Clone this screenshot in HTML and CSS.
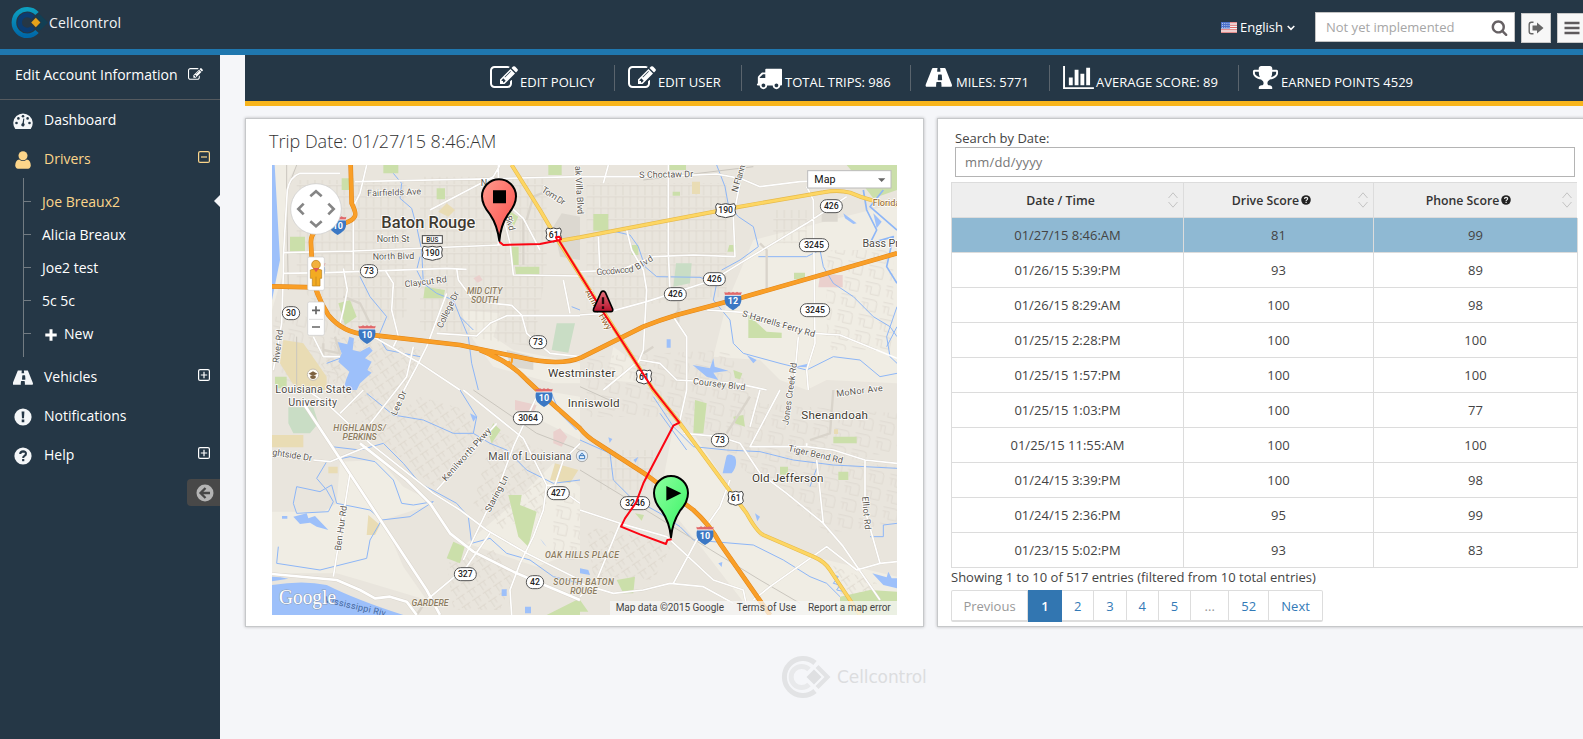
FILE: index.html
```html
<!DOCTYPE html>
<html lang="en">
<head>
<meta charset="utf-8">
<title>Cellcontrol</title>
<link rel="stylesheet" href="styles.css">
</head>
<body>
<svg class="defs" width="0" height="0" aria-hidden="true">
  <defs>
    <symbol id="i-edit" viewBox="0 0 1792 1792"><path d="M888 1184l116-116-152-152-116 116v56h96v96h56zm440-720q-16-16-33 1l-350 350q-17 17-1 33t33-1l350-350q17-17 1-33zm80 594v190q0 119-84.500 203.500t-203.500 84.500h-832q-119 0-203.500-84.500t-84.500-203.500v-832q0-119 84.500-203.500t203.500-84.500h832q63 0 117 25 15 7 18 23 3 17-9 29l-49 49q-14 14-32 8-23-6-45-6h-832q-66 0-113 47t-47 113v832q0 66 47 113t113 47h832q66 0 113-47t47-113v-126q0-13 9-22l64-64q15-15 35-7t20 29zm-96-738l288 288-672 672h-288v-288zm444 132l-92 92-288-288 92-92q28-28 68-28t68 28l152 152q28 28 28 68t-28 68z"/></symbol>
    <symbol id="i-truck" viewBox="0 0 1792 1792"><path d="M640 1408q0-52-38-90t-90-38-90 38-38 90 38 90 90 38 90-38 38-90zm-384-512h384v-256h-158q-13 0-22 9l-195 195q-9 9-9 22v30zm1280 512q0-52-38-90t-90-38-90 38-38 90 38 90 90 38 90-38 38-90zm256-1088v1024q0 15-4 26.500t-13.500 18.500-16.500 11.500-23.500 6-22.500 2-25.500 0-22.500-.5q0 106-75 181t-181 75-181-75-75-181h-384q0 106-75 181t-181 75-181-75-75-181h-64q-3 0-22.500.5t-25.500 0-22.500-2-23.500-6-16.500-11.500-13.500-18.500-4-26.500q0-26 19-45t45-19v-320q0-8-.5-35t0-38 2.500-34.500 6.500-37 14-30.500 22.500-30l198-198q19-19 50.500-32t58.500-13h160v-192q0-26 19-45t45-19h1024q26 0 45 19t19 45z"/></symbol>
    <symbol id="i-road" viewBox="0 0 1792 1792"><path d="M1111 1016v-4l-24-320q-1-13-11-22.500t-23-9.500h-186q-13 0-23 9.500t-11 22.500l-24 320v4q-1 12 8 20t21 8h244q12 0 21-8t8-20zm681 404q0 73-46 73h-704q13 0 22-9.500t8-22.500l-20-256q-1-13-11-22.500t-23-9.500h-272q-13 0-23 9.500t-11 22.500l-20 256q-1 13 8 22.500t22 9.500h-704q-46 0-46-73 0-54 26-116l417-1044q8-19 26-33t38-14h339q-13 0-23 9.500t-11 22.500l-15 192q-1 14 8 23t22 9h166q13 0 22-9t8-23l-15-192q-1-13-11-22.500t-23-9.500h339q20 0 38 14t26 33l417 1044q26 62 26 116z"/></symbol>
    <symbol id="i-chart" viewBox="0 0 2048 1792"><path d="M640 896v512h-256v-512h256zm384-512v1024h-256v-1024h256zm1024 1152v128h-2048v-1536h128v1408h1920zm-640-896v768h-256v-768h256zm384-384v1152h-256v-1152h256z"/></symbol>
    <symbol id="i-trophy" viewBox="0 0 1792 1792"><path d="M522 883q-74-162-74-371h-256v96q0 78 94.500 162t235.500 113zm1078-275v-96h-256q0 209-74 371 141-29 235.500-113t94.500-162zm128-128v128q0 71-41.500 143t-112 130-173 97.500-215.500 44.500q-42 54-95 95-38 34-52.500 72.500t-14.500 89.500q0 54 30.500 91t97.500 37q75 0 133.500 45.500t58.500 114.500v64q0 14-9 23t-23 9h-832q-14 0-23-9t-9-23v-64q0-69 58.500-114.500t133.500-45.500q67 0 97.500-37t30.500-91q0-51-14.500-89.500t-52.500-72.500q-53-41-95-95-113-5-215.500-44.500t-173-97.500-112-130-41.500-143v-128q0-40 28-68t68-28h288v-96q0-66 47-113t113-47h576q66 0 113 47t47 113v96h288q40 0 68 28t28 68z"/></symbol>
    <symbol id="i-search" viewBox="0 0 1792 1792"><path d="M1216 832q0-185-131.500-316.500t-316.500-131.500-316.500 131.500-131.500 316.500 131.500 316.500 316.500 131.500 316.500-131.500 131.500-316.500zm512 832q0 52-38 90t-90 38q-54 0-90-38l-343-342q-179 124-399 124-143 0-273.500-55.500t-225-150-150-225-55.500-273.500 55.500-273.500 150-225 225-150 273.500-55.500 273.500 55.500 225 150 150 225 55.500 273.500q0 220-124 399l343 343q37 37 37 90z"/></symbol>
    <symbol id="i-help" viewBox="0 0 18 18"><circle cx="9" cy="9" r="8.600"/><path d="M6.200 7Q6.400 4.400 9.100 4.400Q12 4.500 11.900 6.800Q11.800 8.100 10.400 8.900Q9.200 9.500 9.200 10.900" fill="none" stroke="var(--hole)" stroke-width="2.100"/><path d="M8.100 12h2.200v2.200h-2.200z" fill="var(--hole)"/></symbol>
    <g id="shield"><path d="M-24 -14Q-28 4 -20 16Q-10 26 0 31Q10 26 20 16Q28 4 24 -14Z" fill="#3b78c4"/><path d="M-24 -15L-26 -24Q-18 -20 -12 -25Q-6 -20 0 -25Q6 -20 12 -25Q18 -20 26 -24L24 -15Z" fill="#e0686a"/><path d="M-25 -14h50" stroke="#fff" stroke-width="2.500"/></g>
    <g id="ov2"><rect x="-26" y="-19" width="52" height="39" rx="19" fill="#fff" stroke="#555" stroke-width="3"/></g>
    <g id="ov3"><rect x="-33" y="-19" width="66" height="39" rx="19" fill="#fff" stroke="#555" stroke-width="3"/></g>
    <g id="ov4"><rect x="-44" y="-19" width="88" height="39" rx="19" fill="#fff" stroke="#555" stroke-width="3"/></g>
    <g id="us2"><path d="M-19 -20Q-10 -15 0 -20Q10 -15 19 -20L23 -12Q18 0 23 10Q20 19 9 19L0 22L-9 19Q-20 19 -23 10Q-18 0 -23 -12Z" fill="#fff" stroke="#444" stroke-width="3"/></g>
    <g id="us3"><path d="M-26 -20Q-13 -15 0 -20Q13 -15 26 -20L30 -12Q26 0 30 10Q26 19 13 19L0 22L-13 19Q-26 19 -30 10Q-26 0 -30 -12Z" fill="#fff" stroke="#444" stroke-width="3"/></g>
    <pattern id="grid" width="22" height="34" patternUnits="userSpaceOnUse"><path d="M0 5H22M11 5V34" stroke="#d9d4ca" stroke-width="2" fill="none"/></pattern>
    <pattern id="grid2" width="38" height="30" patternUnits="userSpaceOnUse" patternTransform="rotate(-34)"><path d="M0 7H30M8 7V30M21 7V23" stroke="#d8d2c8" stroke-width="2" fill="none"/></pattern>
    <pattern id="grid3" width="64" height="50" patternUnits="userSpaceOnUse" patternTransform="rotate(12)"><path d="M4 8H40Q50 8 50 18V42H24V20H4M12 20V40" stroke="#dad5cb" stroke-width="2" fill="none"/></pattern>
    <linearGradient id="redpin" x1="0" x2="1" y2="1"><stop offset="0" stop-color="#ff9b8e"/><stop offset="1" stop-color="#fd4a47"/></linearGradient>
    <linearGradient id="greenpin" x1="0" x2="1" y2="1"><stop offset="0" stop-color="#8dffa0"/><stop offset="1" stop-color="#35f362"/></linearGradient>
    <linearGradient id="warn" x1="0" x2="0" y2="1"><stop offset="0" stop-color="#e5727c"/><stop offset="1" stop-color="#b5102b"/></linearGradient>
    <linearGradient id="ring" x1="0" x2="0" y2="1"><stop offset="0" stop-color="#0d9fc0"/><stop offset="1" stop-color="#0068a8"/></linearGradient>
  </defs>
</svg>

<header class="top">
  <div class="brand">
    <svg width="38" height="34" viewBox="0 0 38 34">
      <path d="M26 7.500A13.300 13.300 0 1 0 26 25.500" fill="none" stroke="url(#ring)" stroke-width="4.600"/>
      <path d="M22 11.500A7.600 7.600 0 1 0 22 21.500" fill="none" stroke="#0b3c72" stroke-width="4.600"/>
      <path d="M28 7.500L37 16.500L28 25.500L25 22.500L30.500 16.500L25 10.500Z" fill="#123f54"/>
      <path d="M24.800 11.800L29.400 16.500L24.800 21.200L20.200 16.500Z" fill="#e5a21a"/>
    </svg>
    <span class="brand-name">Cellcontrol</span>
  </div>
  <div class="top-tools">
    <div class="lang">
      <svg width="16" height="11" viewBox="0 0 16 11"><path fill="#f4f0f0" d="M0 0h16v11H0z"/><path d="M0 .8h16M0 3.200h16M0 5.500h16M0 7.800h16M0 10.200h16" stroke="#de6a68" stroke-width="1.100"/><path fill="#4d71c9" d="M0 0h9v6.500H0z"/><path d="M1 1.500h8M1 3.500h8M1 5.500h8" stroke="#c9d6f4" stroke-width=".8" stroke-dasharray="1 1.200"/></svg>
      <span>English</span>
      <svg width="8" height="6" viewBox="0 0 8 6"><path d="M.7 .9L4 4.300L7.300 .9" fill="none" stroke="#fff" stroke-width="1.500"/></svg>
    </div>
    <div class="search"><span>Not yet implemented</span><svg class="ic" width="17" height="17"><use href="#i-search"/></svg></div>
    <div class="tbtn out"><svg width="16" height="14" viewBox="0 0 16 14"><path d="M5.500 1.200H3.400Q1.200 1.200 1.200 3.400V10.600Q1.200 12.800 3.400 12.800H5.500" fill="none" stroke="#666" stroke-width="1.400"/><path d="M4.500 4.500H9V1.500L15.500 7L9 12.500V9.500H4.500Z" fill="#666"/></svg></div>
    <div class="tbtn"><svg width="16" height="14" viewBox="0 0 16 14"><path d="M.5 2h15M.5 7h15M.5 12h15" stroke="#5e5a5c" stroke-width="2.400"/></svg></div>
  </div>
</header>

<div class="body">
  <aside class="side">
    <div class="account"><span>Edit Account Information</span><svg class="ic" width="15" height="15"><use href="#i-edit"/></svg></div>
    <nav>
      <div class="row"><svg class="lead" width="20" height="18" viewBox="0 0 20 18"><path d="M2.300 17A9.700 9.700 0 1 1 17.700 17Z"/><g fill="#253746"><circle cx="3.500" cy="11" r="1.300"/><circle cx="5.400" cy="6.400" r="1.300"/><circle cx="10" cy="4.200" r="1.300"/><circle cx="14.600" cy="6.400" r="1.300"/><circle cx="16.500" cy="11" r="1.300"/><path d="M10.300 6.500L11.300 6.800L10.900 11Q12.500 12.500 11 14.200Q9.400 15 8.300 13.500Q8 11.800 9.500 11Z"/></g></svg><span>Dashboard</span></div>
      <div class="row on"><svg class="lead" width="20" height="18" viewBox="0 0 20 18"><circle cx="10" cy="4.800" r="4.500"/><path d="M6.200 8.500Q10 11.500 13.800 8.500Q17.500 9 17.800 14.500Q17.500 17.500 15 17.700H5Q2.500 17.500 2.200 14.500Q2.500 9 6.200 8.500Z"/></svg><span>Drivers</span><svg class="tog" width="12" height="12" viewBox="0 0 12 12"><rect x=".6" y=".6" width="10.800" height="10.800" rx="1.500"/><path d="M3 6h6"/></svg></div>
      <div class="sub">
        <div class="leaf on">Joe Breaux2</div>
        <div class="leaf">Alicia Breaux</div>
        <div class="leaf">Joe2 test</div>
        <div class="leaf">5c 5c</div>
        <div class="leaf new"><svg width="12" height="12" viewBox="0 0 12 12"><path d="M6 .3V11.700M.3 6H11.700" stroke="#fff" stroke-width="3"/></svg>New</div>
      </div>
      <div class="row"><svg class="lead" width="20" height="20"><use href="#i-road"/></svg><span>Vehicles</span><svg class="tog" width="12" height="12" viewBox="0 0 12 12"><rect x=".6" y=".6" width="10.800" height="10.800" rx="1.500"/><path d="M2.800 6h6.400M6 2.800v6.400"/></svg></div>
      <div class="row"><svg class="lead" width="20" height="18" viewBox="0 0 20 18"><circle cx="10" cy="9" r="8.600"/><path d="M8.600 3.500h2.800l-.4 6.800h-2zM8.700 11.600h2.600v2.600h-2.600z" fill="#253746"/></svg><span>Notifications</span></div>
      <div class="row"><svg class="lead" width="20" height="18"><use href="#i-help"/></svg><span>Help</span><svg class="tog" width="12" height="12" viewBox="0 0 12 12"><rect x=".6" y=".6" width="10.800" height="10.800" rx="1.500"/><path d="M2.800 6h6.400M6 2.800v6.400"/></svg></div>
    </nav>
    <div class="collapse"><svg width="18" height="18" viewBox="0 0 18 18"><circle cx="9" cy="9" r="8.500" fill="#b4b4b4"/><path d="M9.500 4L4.500 9L9.500 14M5 9H14" fill="none" stroke="#474747" stroke-width="2.300"/></svg></div>
  </aside>

  <main>
    <div class="stats">
      <div class="stat"><svg class="ic" width="28" height="28"><use href="#i-edit"/></svg><span>EDIT POLICY</span></div>
      <div class="stat"><svg class="ic" width="28" height="28"><use href="#i-edit"/></svg><span>EDIT USER</span></div>
      <div class="stat wide"><svg class="ic" width="26" height="26"><use href="#i-truck"/></svg><span>TOTAL TRIPS: 986</span></div>
      <div class="stat wide"><svg class="ic" width="28" height="26"><use href="#i-road"/></svg><span>MILES: 5771</span></div>
      <div class="stat"><svg class="ic" width="31" height="27"><use href="#i-chart"/></svg><span>AVERAGE SCORE: 89</span></div>
      <div class="stat"><svg class="ic" width="27" height="27"><use href="#i-trophy"/></svg><span>EARNED POINTS 4529</span></div>
    </div>

    <div class="cards">
      <section class="card trip">
        <h1>Trip Date: 01/27/15 8:46:AM</h1>
        <svg class="map" width="625" height="450" viewBox="36 45 1875 1350">
          <rect x="36" y="45" width="1875" height="1350" fill="#e9e5dd"/>
          <!-- open land -->
          <g fill="#f0ede4">
            <path d="M36 45H110L85 90L75 350L36 480ZM240 935L360 930L430 1010L525 1060L370 1110L430 1250L500 1350L300 1290L230 1270L36 1270V1085H190L230 1060Z"/>
            <path d="M600 480L720 490L700 560L760 600L960 640V700L880 700L700 650L640 570ZM1240 830L1300 850L1400 1000L1500 1160L1660 1220L1911 1280V1395H1480L1330 1200L1200 1040ZM1480 270L1911 160V500L1911 700L1700 690L1640 720L1560 690L1500 630L1360 620L1400 460Z"/>
            <path d="M620 1180L760 1060L880 940L960 1010V1200L830 1250ZM840 720L960 740V870L800 790ZM1060 590L1130 640L1150 700L1040 690Z"/>
          </g>
          <!-- residential streets -->
          <path fill="url(#grid)" d="M110 90L440 90V500L240 540L110 400ZM480 80H860V350L820 590L480 540ZM980 100H1400V440L980 480ZM1010 900H1180V1020H1010ZM1540 180H1640V280H1540Z"/>
          <path fill="url(#grid2)" d="M240 560L480 600L420 780L330 850L180 640ZM700 840L850 900L860 1080L720 1140L640 1060ZM480 740L620 780L660 900L520 1010L340 850ZM980 1130L1240 1180L1180 1290L1000 1280ZM560 1240L700 1200L760 1290L720 1380H580ZM1700 1240L1850 1300L1820 1370L1740 1330Z"/>
          <path fill="url(#grid3)" d="M980 620L1400 600L1500 760L1911 790V900L1500 1000L1260 800L980 800ZM1460 900L1911 950V1120L1700 1150L1540 1000ZM40 500H240V700H40ZM1700 300H1900V600H1700ZM880 1030H960V1230H880Z"/>
          <!-- parks, schools, medical -->
          <g fill="#cbdfaa">
            <path d="M370 45H415V70H370ZM245 85H280V120H245ZM90 260H135V310H90ZM495 410L555 420L550 445H490ZM235 460L270 450L290 500L255 525ZM765 350H838V376H768ZM755 290H776V345H755ZM745 180L775 200L760 230L745 205ZM530 115H555V148H530ZM45 680H80V715H45Z"/>
            <path d="M1000 192H1045V242H1000ZM1225 45H1278V60H1225ZM1465 495L1520 545L1565 548V564H1465ZM1602 368H1635V388H1602ZM1760 45H1911V120L1840 145L1790 80ZM1115 285H1135V315H1115ZM1420 660L1447 670L1440 688L1425 684ZM1408 285H1428V305H1402ZM1238 125h22v12h-22ZM865 45H905V75H865Z"/>
            <path d="M745 1035H785L780 1065L830 1085L805 1190L775 1160ZM580 1175L614 1190L600 1240L560 1225ZM700 820L722 840L695 880L685 850ZM860 1395L960 1345V1395ZM1305 750L1340 760L1330 850L1300 850ZM1420 800L1450 795L1455 830L1425 820ZM1720 860H1790V880H1720ZM1560 950h24v24h-24ZM1735 965H1765V990H1735ZM1740 1340L1830 1320L1911 1325V1395H1740ZM1070 1290L1125 1280L1120 1330L1090 1330ZM960 1350V1385H985ZM1125 1090L1152 1095L1145 1112Z"/>
          </g>
          <g fill="#e9dcb4"><path d="M70 570L130 580L200 680V720H110L60 640ZM36 855H130V892H36ZM885 940L955 960L930 1000L870 990ZM325 1095L360 1125L345 1155H320ZM1296 95H1320V132H1296ZM205 950h28v20h-28ZM1722 838h12v14h-12ZM535 185l25-25l25 20l-20 20Z"/></g>
          <g fill="#c9ddc5"><path d="M85 772H160L175 820L150 850H100L85 820ZM1248 340H1295L1290 400L1240 410ZM890 520H945L925 608L875 600Z"/></g>
          <g fill="#ead0cd"><path d="M1680 375H1748V412H1675ZM880 845L900 835L922 860L905 890L880 880ZM765 750L830 765L820 790L765 780ZM640 385l18-10l10 15l-15 8Z"/></g>
          <path d="M880 230L905 190L960 200V330L900 320ZM1685 185h48v30h-48ZM740 600l80 20v40l-70-10Z" fill="#dcd8d0"/>
          <!-- water -->
          <g fill="#9dc0fa">
            <path d="M36 45H44L60 330L36 450ZM36 1305Q130 1290 200 1305Q290 1350 430 1395H36ZM36 1280Q60 1280 85 1286L36 1294Z"/>
            <path d="M230 575L262 583L268 560L282 565L278 600L300 605L328 590L338 602L315 625L335 635L322 660L335 668L300 700L290 720H250L258 690L268 665L235 635L245 610Z"/>
            <path d="M66 1098H82V1106H66ZM100 1100L140 1090L145 1105L165 1098L205 1140L170 1130L150 1118L120 1122Z"/>
            <path d="M1398 925Q1400 905 1425 920Q1435 945 1415 970H1388ZM1298 645L1350 655L1360 625L1364 650L1405 662L1360 668L1375 690L1340 680ZM1837 1270L1880 1282L1885 1265L1895 1285L1911 1285V1315L1870 1305ZM1220 568h12v25h-12ZM1750 190L1790 220L1780 222L1755 205ZM1460 615L1490 630L1480 640ZM1840 190L1865 215L1850 235ZM740 1320L742 1318L730 1335ZM725 1318h15v20h-15ZM795 1370h18v20h-18ZM960 1255L985 1260L990 1275L960 1270ZM840 1165L860 1190L850 1180ZM630 790L650 800L640 815ZM1045 862l12 5l-8 12ZM1120 930l15-10l-8 18ZM1485 1090l15 10l-8 14ZM1375 1240l12-4l-2 15ZM1605 650L1650 640L1640 652Z"/>
          </g>
          <g fill="none" stroke="#8db6f7" stroke-width="3" stroke-linejoin="round">
            <path d="M400 70L425 100L420 145L455 175L470 230L485 300L490 400L530 430L580 450L600 500L625 560L635 640L655 720"/>
            <path d="M300 380L330 440L380 500L355 560L380 600L480 620M960 480L935 470M600 500L640 540"/>
            <path d="M490 400L470 360L480 320M1370 45L1395 110L1405 165L1435 200L1480 230L1495 290L1440 330L1385 360"/>
            <path d="M1045 240L1110 255L1135 290L1155 350L1190 380L1320 382L1370 400L1360 450L1410 510L1420 580L1450 610L1560 640L1640 660L1720 620L1800 630L1860 680L1911 670"/>
            <path d="M1495 320H1640L1680 300L1690 350L1720 400L1780 440L1840 500L1890 530L1911 560M1880 590L1911 530M1911 470L1880 560L1890 620L1911 640"/>
            <path d="M1810 120L1820 180L1850 240L1830 280L1900 260L1880 350L1911 400M1870 120L1830 170L1911 240" stroke-width="5"/>
            <path d="M200 640L240 625M215 890L300 900L370 880L430 940L480 1000L590 1060L625 1100L635 1180L690 1165L740 1210L810 1230L880 1280L960 1300"/>
            <path d="M110 1010L180 1025L215 1005L230 1060L330 1080L365 1110L450 1100L520 1055L460 1065L425 1060L400 990L345 935L270 920L200 935L170 985L200 1020L220 1055L205 1085L110 1090L100 1060ZM55 1190L50 1240L180 1260L320 1225L330 1170L365 1110"/>
            <path d="M320 730L400 795L490 810L580 850L640 850L690 880L740 900L800 960L880 1000L960 990M600 720L650 800L640 850M870 720L900 790L950 840M960 870L1050 910L1060 990L1110 1040L1200 1090L1260 1130L1300 1170L1480 1185L1570 1230L1650 1280L1700 1300L1740 1340"/>
            <path d="M1180 740L1240 830L1300 890L1400 900L1500 905L1600 930L1720 945L1911 955M1200 790L1280 900M1650 1010L1670 955M1830 1160H1870V1125L1911 1120M1710 1270l25 10l-15 20l20 5l-10 15l18 4"/>
          </g>
          <!-- rail -->
          <path d="M80 45V150L85 420M110 720V560M110 45L85 110M960 710L1070 760M640 720L830 850L960 900M960 960L1100 1045L1500 1290L1620 1360M1150 90L1480 50" fill="none" stroke="#cac6be" stroke-width="3"/>
          <!-- local road casings -->
          <g fill="none" stroke="#d9d4cb" stroke-linejoin="round" stroke-width="7">
            <path d="M240 70H120Q90 80 82 120L70 320V370L200 368L560 355L620 358M320 45L300 130L280 170V360M72 308L280 303L720 285M250 355L262 420L250 480L240 520M375 360L400 400L395 480L415 560L400 590M590 355L595 390L640 450L700 460L755 466L785 495L800 550L870 610L960 620M285 95L960 80M510 180L700 80L720 45M715 45V285M720 160L750 280L760 375L960 378M740 160L790 205L840 300M790 205V345M190 600L240 610L225 560M160 560L190 620H240M530 550L650 558L690 520L740 497H960M560 430L500 590L470 650L400 780M70 370L65 520L40 660M800 210L820 140L870 120M340 560L480 640L600 720M910 390L930 490M250 440L300 460L330 520"/>
            <path d="M960 80H1200L1370 72L1440 85L1500 110L1620 95L1750 90M1045 45L1030 100M1225 45V310L1230 420M1100 240L1115 300L1150 360L1160 420L1150 600L1130 650M960 495L1030 490L1160 455L1360 390L1440 340L1640 220L1760 140M1640 110L1660 150L1665 580L1640 660L1645 720M960 365L1080 360L1180 320L1300 315L1425 320L1420 200L1440 100M1340 480L1450 487L1580 530L1660 550L1740 555L1850 600M1240 500L1280 560V720M1615 560L1600 720M1030 720L1140 630L1200 640L1250 690L1430 700L1520 720M1520 420V300L1500 280M1015 260L1020 370M1180 590L1150 610M1255 455V515L1240 500L1260 475"/>
            <path d="M240 790L310 720M190 580V620M140 720L200 760L270 825L330 880L520 1030L600 1080L680 1140L800 1210L960 1290M460 590L440 680L300 860M710 820L530 1020M610 720L790 865L860 1005L850 1080L820 1160L780 1240L750 1320L755 1395M830 740L760 890L720 1000L610 1230M160 930L210 935L320 890M270 970L220 1280M960 1060L890 1010M690 1150L620 1250L500 1350L470 1395M880 1020L910 930L960 880"/>
            <path d="M1280 720L1260 810M960 1080L1080 1120L1220 1160L1360 1290L1450 1320L1460 1370M1080 1120L1010 1290L960 1340M1270 850L1380 860L1440 880L1500 970L1580 1030L1690 1120L1750 1190L1860 1350M1470 740L1400 850M1560 720L1470 890H1640M1500 720L1490 760L1470 830M1640 890L1720 900L1815 930L1911 940M1815 930V1080L1860 1240L1790 1260L1700 1190L1530 1310L1480 1350M1670 930L1690 1120M1410 990L1380 1070L1310 1170L1240 1300M960 1300L1060 1330L1150 1320L1230 1300L1330 1310L1420 1360M1720 720L1710 850L1650 870M1860 1240L1911 1235"/>
            <path stroke-width="11" d="M130 760L500 1320L540 1395M300 880L440 990L510 1060L570 1150L640 1205L760 1265L830 1295L960 1350M36 1272L230 1290L300 1320L345 1345L390 1340L440 1355L470 1395"/>
          </g>
          <!-- local roads -->
          <g fill="none" stroke="#fff" stroke-linejoin="round" stroke-width="5">
            <path d="M240 70H120Q90 80 82 120L70 320V370L200 368L560 355L620 358M320 45L300 130L280 170V360M72 308L280 303L720 285M250 355L262 420L250 480L240 520M375 360L400 400L395 480L415 560L400 590M590 355L595 390L640 450L700 460L755 466L785 495L800 550L870 610L960 620M285 95L960 80M510 180L700 80L720 45M715 45V285M720 160L750 280L760 375L960 378M740 160L790 205L840 300M530 550L650 558L690 520L740 497H960M560 430L500 590L470 650L400 780M70 370L65 520L40 660M340 560L480 640L600 720M160 560L190 620H240M910 390L930 490"/>
            <path d="M960 80H1200L1370 72L1440 85L1500 110L1620 95L1750 90M1045 45L1030 100M1225 45V310L1230 420M1100 240L1115 300L1150 360L1160 420L1150 600L1130 650M960 495L1030 490L1160 455L1360 390L1440 340L1640 220L1760 140M1640 110L1660 150L1665 580L1640 660L1645 720M960 365L1080 360L1180 320L1300 315L1425 320L1420 200L1440 100M1340 480L1450 487L1580 530L1660 550L1740 555L1850 600L1911 625M1240 500L1280 560V720M1615 560L1600 720M1030 720L1140 630L1200 640L1250 690L1430 700L1520 720M1015 260L1020 370"/>
            <path d="M240 790L310 720M140 720L200 760L270 825L330 880L520 1030L600 1080L680 1140L800 1210L960 1290M460 590L440 680L300 860M710 820L530 1020M160 930L210 935L320 890M270 970L220 1280M830 740L760 890L720 1000L610 1230M960 1060L890 1010L860 1005M690 1150L620 1250L500 1350M880 1020L910 930L960 880M610 720L790 865L860 1005L850 1080L820 1160L780 1240L750 1320L755 1395"/>
            <path d="M1280 720L1260 810M960 1080L1080 1120L1220 1160L1360 1290L1450 1320L1460 1370M1080 1120L1010 1290L960 1340M1270 850L1380 860L1440 880L1500 970L1580 1030L1690 1120L1750 1190L1860 1350M1560 720L1470 890H1640M1500 720L1470 830M1640 880V890L1720 900L1815 930L1911 940M1815 930V1080L1860 1240L1790 1260L1700 1190L1530 1310L1480 1350M1670 930L1690 1120M1410 990L1380 1070L1310 1170L1240 1300M960 1300L1060 1330L1150 1320L1230 1300L1330 1310L1420 1360M1860 1240L1911 1235"/>
            <path stroke-width="8" d="M130 760L500 1320L540 1395M300 880L440 990L510 1060L570 1150L640 1205L760 1265L830 1295L960 1350M36 1272L230 1290L300 1320L345 1345L390 1340L440 1355L470 1395"/>
          </g>
          <!-- US highways -->
          <g fill="none" stroke-linejoin="round">
            <path stroke="#e6b94a" stroke-width="12" d="M755 45L840 180L890 265L1180 720L1260 820L1400 1010L1460 1090Q1490 1145 1510 1155L1660 1220Q1695 1235 1710 1260L1800 1395M900 272L960 262L1440 170L1690 127Q1735 118 1770 128Q1830 155 1911 165"/>
            <path stroke="#fdd663" stroke-width="8.500" d="M755 45L840 180L890 265L1180 720L1260 820L1400 1010L1460 1090Q1490 1145 1510 1155L1660 1220Q1695 1235 1710 1260L1800 1395M900 272L960 262L1440 170L1690 127Q1735 118 1770 128Q1830 155 1911 165"/>
          </g>
          <!-- interstates -->
          <g fill="none" stroke-linejoin="round">
            <path stroke="#e08519" stroke-width="14" d="M272 45L275 160Q290 190 284 200Q270 225 200 225Q150 240 153 280L158 380Q165 430 205 495Q250 550 320 553L600 585L780 622Q900 650 965 622L1150 530Q1200 510 1250 495L1420 450L1911 310M36 409L165 412M660 600Q750 635 800 690L870 755L960 835Q980 860 1010 878L1160 975L1300 1080Q1350 1125 1380 1180L1530 1395"/>
            <path stroke="#f99f28" stroke-width="11" d="M272 45L275 160Q290 190 284 200Q270 225 200 225Q150 240 153 280L158 380Q165 430 205 495Q250 550 320 553L600 585L780 622Q900 650 965 622L1150 530Q1200 510 1250 495L1420 450L1911 310M36 409L165 412M660 600Q750 635 800 690L870 755L960 835Q980 860 1010 878L1160 975L1300 1080Q1350 1125 1380 1180L1530 1395"/>
            <path stroke="#f99f28" stroke-width="6" d="M650 595Q720 612 770 620M755 618Q760 640 745 645M680 612Q720 640 750 635M170 410L185 450"/>
          </g>
          <!-- shields -->
          <use href="#shield" x="233" y="224"/><use href="#shield" x="170" y="363"/><use href="#shield" x="321" y="551"/><use href="#shield" x="1419" y="450"/><use href="#shield" x="852" y="740"/><use href="#shield" x="1335" y="1154"/>
          <use href="#ov2" x="327" y="363"/><use href="#ov2" x="93" y="489"/><use href="#ov2" x="834" y="576"/><use href="#ov2" x="1380" y="870"/><use href="#ov2" x="825" y="1296"/>
          <use href="#ov3" x="1714" y="168"/><use href="#ov3" x="1363" y="387"/><use href="#ov3" x="1246" y="432"/><use href="#ov3" x="895" y="1029"/><use href="#ov3" x="616" y="1272"/>
          <use href="#ov4" x="1662" y="285"/><use href="#ov4" x="1665" y="480"/><use href="#ov4" x="804" y="804"/><use href="#ov4" x="1125" y="1059"/>
          <use href="#us2" x="881" y="254"/><use href="#us2" x="1152" y="680"/><use href="#us2" x="1427" y="1044"/>
          <use href="#us3" x="517" y="309"/><use href="#us3" x="1397" y="181"/>
          <rect x="487" y="257" width="60" height="23" fill="#fff" stroke="#444" stroke-width="3"/>
          <g class="num">
            <text x="327" y="372">73</text><text x="93" y="498">30</text><text x="834" y="585">73</text><text x="1380" y="879">73</text><text x="825" y="1305">42</text>
            <text x="1714" y="177">426</text><text x="1363" y="396">426</text><text x="1246" y="441">426</text><text x="895" y="1038">427</text><text x="616" y="1281">327</text>
            <text x="1662" y="294">3245</text><text x="1665" y="489">3245</text><text x="804" y="813">3064</text><text x="1125" y="1068">3246</text>
            <text x="881" y="263">61</text><text x="1152" y="689">61</text><text x="1427" y="1053">61</text><text x="517" y="318">190</text><text x="1397" y="190">190</text>
            <text class="bus" x="517" y="276">BUS</text>
          </g>
          <g class="inum"><text x="233" y="237">10</text><text x="321" y="563">10</text><text x="1419" y="462">12</text><text x="852" y="752">10</text><text x="1335" y="1166">10</text></g>
          <!-- place names -->
          <g class="road">
            <text x="322" y="139" textLength="162" transform="rotate(-2 322 139)">Fairfields Ave</text>
            <text x="350" y="276" textLength="98">North St</text>
            <text x="338" y="329" textLength="125" transform="rotate(-1 338 329)">North Blvd</text>
            <text x="435" y="412" textLength="127" transform="rotate(-7 435 412)">Claycut Rd</text>
            <text x="546" y="536" textLength="118" transform="rotate(-64 546 536)">College Dr</text>
            <text x="843" y="124" textLength="78" transform="rotate(33 843 124)">Tom Dr</text>
            <text x="736" y="200" textLength="45" transform="rotate(75 736 200)">Blvd</text>
            <text x="662" y="108">N</text>
            <text x="945" y="48" textLength="145" transform="rotate(87 945 48)">ak Villa Blvd</text>
            <text x="56" y="640" textLength="100" transform="rotate(-82 56 640)">River Rd</text>
            <text x="1138" y="84" textLength="162" transform="rotate(-1 1138 84)">S Choctaw Dr</text>
            <text x="1432" y="128" textLength="84" transform="rotate(-73 1432 128)">N Flann</text>
            <text x="1838" y="168" class="fl">Florida</text>
            <text x="1010" y="376" textLength="112" transform="rotate(-5 1010 376)">Goodwood</text>
            <text x="1132" y="361" textLength="58" transform="rotate(-32 1132 361)">Blvd</text>
            <text x="1445" y="499" textLength="226" transform="rotate(16 1445 499)">S Harrells Ferry Rd</text>
            <text x="974" y="425" class="fl" transform="rotate(60 974 425)">Airline Hwy</text>
            <text x="1298" y="702" textLength="158" transform="rotate(7 1298 702)">Coursey Blvd</text>
            <text x="1585" y="826" textLength="188" transform="rotate(-82 1585 826)">Jones Creek Rd</text>
            <text x="1730" y="740" textLength="140" transform="rotate(-7 1730 740)">MoNor Ave</text>
            <text x="1583" y="903" textLength="168" transform="rotate(13 1583 903)">Tiger Bend Rd</text>
            <text x="1806" y="1040" textLength="100" transform="rotate(85 1806 1040)">Elliot Rd</text>
            <text x="409" y="798" textLength="78" transform="rotate(-66 409 798)">Lee Dr</text>
            <text x="36" y="915" textLength="120" transform="rotate(9 36 915)">ghtside Dr</text>
            <text x="242" y="1203" textLength="136" transform="rotate(-82 242 1203)">Ben Hur Rd</text>
            <text x="558" y="995" textLength="204" transform="rotate(-48 558 995)">Kenilworth Pkwy</text>
            <text x="690" y="1088" textLength="120" transform="rotate(-62 690 1088)">Staring Ln</text>
            <text x="190" y="1356" textLength="190" class="river" transform="rotate(13 190 1356)">Mississippi Riv</text>
          </g>
          <g class="hood">
            <text x="674" y="432">MID CITY</text><text x="674" y="459">SOUTH</text>
            <text x="299" y="843" textLength="158">HIGHLANDS/</text><text x="299" y="871">PERKINS</text>
            <text x="510" y="1367">GARDERE</text>
            <text x="966" y="1224" textLength="222">OAK HILLS PLACE</text>
            <text x="971" y="1305" textLength="182">SOUTH BATON</text><text x="971" y="1332">ROUGE</text>
          </g>
          <g class="town">
            <text class="city" x="505" y="235" textLength="282" lengthAdjust="spacingAndGlyphs">Baton Rouge</text>
            <text x="965" y="680" textLength="202">Westminster</text><text x="1001" y="771" textLength="156">Inniswold</text>
            <text x="1724" y="806" textLength="200">Shenandoah</text><text x="1583" y="995" textLength="214">Old Jefferson</text>
          </g>
          <g class="poi">
            <text x="160" y="728" textLength="228">Louisiana State</text><text x="158" y="767" textLength="146">University</text>
            <text x="810" y="929" textLength="250">Mall of Louisiana</text><text x="1862" y="292">Bass Pr</text>
          </g>
          <circle cx="159" cy="674" r="17" fill="#fffdf8" stroke="#c7bfb2" stroke-width="3"/><path d="M146 671l13-7 13 7-13 7zM151 677v7q8 6 16 0v-7" fill="#7e6240"/>
          <circle cx="966" cy="918" r="17" fill="#e6f0fb" stroke="#aaa" stroke-width="3"/><path d="M958 917h16v9h-16zM961 917q5-16 10 0" fill="none" stroke="#3a77ba" stroke-width="3"/>
          <!-- driven route -->
          <path d="M718 275L730 285L840 282L896 271M888 262L892 272L903 268L898 260Z M896 270L1030 487L1178 716L1258 818L1240 827L1150 1000L1128 1058L1095 1105L1083 1130L1140 1153L1218 1182L1222 1170L1235 1168" fill="none" stroke="#fb0513" stroke-width="6" stroke-linejoin="round"/>
          <g stroke="#000" stroke-width="6" stroke-linejoin="round">
            <path d="M718 273Q712 225 690 193Q666 165 666 139A51 51 0 0 1 768 139Q768 165 744 193Q722 225 718 273Z" fill="url(#redpin)"/>
            <path d="M1233 1162Q1229 1118 1205 1082Q1182 1056 1182 1029A51 51 0 0 1 1284 1029Q1284 1056 1260 1082Q1237 1118 1233 1162Z" fill="url(#greenpin)"/>
            <path d="M1023 427Q1029 420 1036 427L1058 477Q1060 485 1052 485H1006Q998 485 1001 476Z" fill="url(#warn)" stroke-width="5"/>
          </g>
          <path d="M699 121h39v39h-39zM1219 1008L1264 1030L1219 1052Z"/>
          <path d="M1029 442v20M1029 469v8" stroke="#26090d" stroke-width="7"/>
          <!-- map controls -->
          <g fill="#fff">
            <circle cx="168" cy="177" r="76" stroke="#c9c9c9" stroke-width="2"/>
            <path d="M151 139L168 124L185 139M151 214L168 229L185 214M131 161L115 177L131 193M205 161L221 177L205 193" fill="none" stroke="#858585" stroke-width="8"/>
            <rect x="143" y="321" width="50" height="100" rx="5" stroke="#ccc" stroke-width="2"/>
            <circle cx="168" cy="344" r="13" fill="#f2b13c" stroke="#b57a17" stroke-width="2"/><path d="M151 360Q168 352 185 360V385H180V408H157V385H151Z" fill="#f3ab21" stroke="#b8811d" stroke-width="2"/><path d="M159 354H178L168 367Z" fill="#dd5a4e"/><path d="M168 380V406" stroke="#b8811d" stroke-width="2"/>
            <rect x="143" y="456" width="50" height="100" rx="5" stroke="#ccc" stroke-width="2"/>
            <path d="M147 508h42" stroke="#ccc" stroke-width="2"/><path d="M156 481h24M168 469v24M156 531h24" stroke="#666" stroke-width="5"/>
            <rect x="1643" y="62" width="250" height="52" stroke="#bbb" stroke-width="3"/>
            <text x="1663" y="99" font-size="32" fill="#111">Map</text><path d="M1854 85h22l-11 11z" fill="#666"/>
          </g>
          <rect x="1050" y="1353" width="861" height="42" fill="#f5f5f5" opacity=".75"/>
          <g class="legal"><text x="1067" y="1383" textLength="325">Map data ©2015 Google</text><text x="1430" y="1383" textLength="178">Terms of Use</text><text x="1644" y="1383" textLength="248">Report a map error</text></g>
          <text class="goog" x="57" y="1361" textLength="171" lengthAdjust="spacingAndGlyphs">Google</text>
        </svg>
      </section>

      <section class="card list">
        <div class="find"><label>Search by Date:</label><div class="date">mm/dd/yyyy</div></div>
        <div class="grid head">
          <div>Date / Time<svg class="sort" width="10" height="16" viewBox="0 0 10 16"><path d="M.5 6L5 .8L9.500 6M.5 10L5 15.200L9.500 10"/></svg></div>
          <div>Drive Score <svg class="q" width="10" height="10"><use href="#i-help"/></svg><svg class="sort" width="10" height="16" viewBox="0 0 10 16"><path d="M.5 6L5 .8L9.500 6M.5 10L5 15.200L9.500 10"/></svg></div>
          <div>Phone Score <svg class="q" width="10" height="10"><use href="#i-help"/></svg><svg class="sort" width="10" height="16" viewBox="0 0 10 16"><path d="M.5 6L5 .8L9.500 6M.5 10L5 15.200L9.500 10"/></svg></div>
        </div>
        <div class="rows">
          <div class="grid sel"><div>01/27/15 8:46:AM</div><div>81</div><div>99</div></div>
          <div class="grid"><div>01/26/15 5:39:PM</div><div>93</div><div>89</div></div>
          <div class="grid"><div>01/26/15 8:29:AM</div><div>100</div><div>98</div></div>
          <div class="grid"><div>01/25/15 2:28:PM</div><div>100</div><div>100</div></div>
          <div class="grid"><div>01/25/15 1:57:PM</div><div>100</div><div>100</div></div>
          <div class="grid"><div>01/25/15 1:03:PM</div><div>100</div><div>77</div></div>
          <div class="grid"><div>01/25/15 11:55:AM</div><div>100</div><div>100</div></div>
          <div class="grid"><div>01/24/15 3:39:PM</div><div>100</div><div>98</div></div>
          <div class="grid"><div>01/24/15 2:36:PM</div><div>95</div><div>99</div></div>
          <div class="grid"><div>01/23/15 5:02:PM</div><div>93</div><div>83</div></div>
        </div>
        <p class="info">Showing 1 to 10 of 517 entries (filtered from 10 total entries)</p>
        <div class="pager"><span class="off">Previous</span><span class="cur">1</span><span>2</span><span>3</span><span>4</span><span>5</span><span class="off">...</span><span>52</span><span>Next</span></div>
      </section>
    </div>

    <footer>
      <svg width="52" height="44" viewBox="0 0 52 44">
        <g fill="none" stroke="#e2e3e5"><path d="M35 8A18.500 18.500 0 1 0 35 36" stroke-width="5"/><path d="M29 14.500A10.500 10.500 0 1 0 29 29.500" stroke-width="5" stroke="#e8e9eb"/></g>
        <path d="M34 14.500L41.500 22L34 29.500L26.500 22Z" fill="#dfe0e2"/><path d="M38.500 10L50.500 22L38.500 34L35.500 31L44.500 22L35.500 13Z" fill="#e2e3e5"/>
      </svg>
      <span>Cellcontrol</span>
    </footer>
  </main>
</div>
</body>
</html>
```
FILE: styles.css
```css
* { box-sizing: border-box; }
html, body { margin: 0; height: 100%; overflow: hidden; }
body { width: 1583px; height: 739px; background: #f5f6f9; font-family: "Open Sans", sans-serif; font-size: 13px; color: #444; --hole: #253746; }
.defs { position: absolute; }
svg { display: block; flex: none; }

.top { height: 55px; background: #253746; border-bottom: 6px solid #1f77af; display: flex; justify-content: space-between; color: #fff; }
.brand { display: flex; align-items: center; padding: 0 0 3px 11px; }
.brand-name { font-size: 14px; color: #f2f4f5; letter-spacing: .2px; margin-top: -2px; }
.top-tools { display: flex; align-items: flex-start; width: 362px; padding-top: 12px; }
.lang { display: flex; align-items: center; width: 94px; height: 31px; font-size: 13px; flex: none; }
.lang span { margin: -1px 4px 0 3px; }
.search { flex: none; width: 200px; height: 30px; background: #fff; border: 1px solid #c3c3c3; display: flex; align-items: center; justify-content: space-between; padding: 0 6px 0 10px; color: #a6a6a6; }
.ic { fill: #fff; }
.search .ic { fill: #666164; }
.tbtn { flex: none; width: 30px; height: 30px; margin: 1px 0 0 6px; background: #f7f7f7; border: 1px solid #c8c8c8; display: flex; align-items: center; justify-content: center; }

.body { display: flex; height: 684px; }
.side { width: 220px; flex: none; background: #253746; color: #fff; font-size: 14px; }
.account { height: 45px; border-bottom: 1px solid #555a5f; display: flex; align-items: center; gap: 10px; padding: 0 0 6px 15px; }
.row { height: 39px; display: flex; align-items: center; padding: 0 10px 0 13px; }
.row .lead { fill: #f4f6f8; margin-right: 11px; position: relative; top: 1px; }
.row span { flex: 1; }
.row.on, .leaf.on { color: #fcd58a; }
.row.on .lead { fill: #fcd58a; }
.tog { fill: none; stroke: #fff; stroke-width: 1.200; position: relative; top: -2px; }
.row.on .tog { stroke: #fcd58a; }
.sub { margin-left: 23px; border-left: 1px solid #727b82; padding: 7px 0; }
.leaf { height: 33px; display: flex; align-items: center; padding-left: 18px; position: relative; }
.leaf::before { content: ""; position: absolute; left: 0; top: 16px; width: 7px; height: 1px; background: #727b82; }
.leaf.on::after { content: ""; position: absolute; right: 0; top: 10px; border: 6px solid transparent; border-right-color: #f5f6f9; border-left: 0; }
.leaf.new { padding-left: 21px; gap: 7px; }
.leaf.new svg { margin-top: 3px; }
.collapse { margin: 5px 0 0 187px; width: 33px; height: 27px; background: #484848; border-radius: 4px 0 0 4px; display: flex; align-items: center; justify-content: center; padding-left: 2px; }

main { flex: 1; padding-left: 25px; min-width: 0; }
.stats { height: 51px; background: #253746; border-bottom: 5px solid #f8b51c; padding: 10px 0 0 245px; display: grid; grid-template-columns: 125px 127px 169px 139px 189px 180px; align-items: start; color: #fff; }
.stat { height: 26px; display: flex; align-items: flex-start; gap: 2px; padding-left: 13px; border-right: 1px solid #5a646d; white-space: nowrap; }
.stat.wide { padding-left: 14px; gap: 3px; }
.stat:first-child { padding-left: 0; }
.stat:last-child { border: 0; }
.stat span { line-height: 18px; padding-top: 8px; }
.stat svg { margin-top: -1px; }
.stat.wide svg { margin-top: 0; }

.cards { display: flex; gap: 13px; padding-top: 12px; }
.card { height: 509px; background: #fff; border: 1px solid #c6c8ca; box-shadow: 0 0 3px rgba(0,0,0,.25); flex: none; }
.trip { width: 679px; padding: 10px 0 0 26px; }
h1 { margin: 0 0 0 -3px; height: 36px; font-size: 18px; line-height: 24px; font-weight: 300; color: #333; }
.map { font-family: Roboto, sans-serif; }
.map text { paint-order: stroke; }
.num text { font-size: 26px; font-weight: 500; text-anchor: middle; fill: #222; }
.num .bus { font-size: 19px; }
.inum text { font-size: 27px; font-weight: 700; text-anchor: middle; fill: #fff; }
.road text { font-size: 27px; fill: #5c574f; stroke: #fff; stroke-width: 4px; }
.road .fl { fill: #8a5a1c; }
.road .river { fill: #45689c; stroke: none; }
.hood text { font-size: 26px; font-style: italic; font-weight: 500; text-anchor: middle; fill: #8b7b5f; stroke: #f5f2ec; stroke-width: 4px; }
.town text { font-size: 35px; text-anchor: middle; fill: #3f3a30; stroke: #fff; stroke-width: 5px; }
.town .city { font-size: 47px; font-weight: 500; }
.poi text { font-size: 32px; text-anchor: middle; fill: #504b45; stroke: #fff; stroke-width: 5px; }
.legal text { font-size: 30px; fill: #444; }
.goog { font-family: "Liberation Serif", serif; font-size: 60px; fill: #fff; stroke: #8b9bb5; stroke-width: 3px; }

.list { width: 653px; padding: 10px 0 0 13px; }
.find { margin-left: 4px; width: 620px; }
.find label { display: block; height: 18px; line-height: 18px; }
.date { height: 30px; border: 1px solid #b4b4b4; padding-left: 9px; line-height: 28px; color: #777; letter-spacing: .2px; }
.grid { display: grid; grid-template-columns: 233px 190px 204px; height: 35px; }
.grid > div { display: flex; align-items: center; justify-content: center; border-right: 1px solid #dcdcdc; border-bottom: 1px solid #dcdcdc; }
.grid > div:first-child { border-left: 1px solid #dcdcdc; }
.head { margin-top: 5px; height: 36px; width: 626px; overflow: hidden; font-weight: 600; font-size: 12.300px; color: #333; --hole: #eee; }
.head > div { background: #eee; border-top: 1px solid #dcdcdc; position: relative; padding-right: 14px; }
.head .q { fill: #222; margin-left: 2px; }
.sort { position: absolute; right: 5px; top: 9px; fill: none; stroke: #c3c3c3; }
.rows { width: 627px; }
.sel > div { background: #8fb9d3; }
.info { margin: 0; height: 22px; line-height: 19px; }
.pager { display: flex; height: 32px; width: 372px; border: 1px solid #ddd; border-bottom-width: 2px; border-radius: 2px; line-height: 31px; color: #337ab7; }
.pager span { width: 32.300px; text-align: center; border-right: 1px solid #ddd; flex: none; }
.pager .off { color: #999; }
.pager span:first-child { width: 76px; }
.pager .cur { width: 34px; height: 32px; margin-top: -1px; line-height: 33px; background: #3276b1; color: #fff; font-weight: 600; border: 0; }
.pager span:nth-child(7) { width: 38px; }
.pager span:nth-child(8) { width: 40px; }
.pager span:last-child { flex: 1; border: 0; }

footer { display: flex; align-items: center; padding: 28px 0 0 535px; }
footer span { font-family: "DejaVu Sans", sans-serif; font-size: 17px; color: #dcdddf; margin-left: 5px; letter-spacing: -.1px; }
```
